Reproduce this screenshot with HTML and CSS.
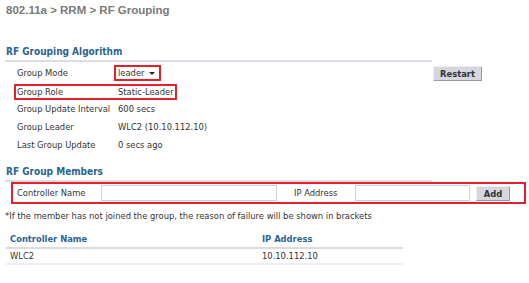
FILE: index.html
```html
<!DOCTYPE html>
<html>
<head>
	<meta charset="UTF-8">
	<title>RF Grouping</title>
	<link rel="stylesheet" href="styles.css">
</head>
<body>
	<h1 class="title">802.11a &gt; RRM &gt; RF Grouping</h1>

	<div class="section">
		<h2 class="section-head">RF Grouping Algorithm</h2>
		<div class="algo">
			<div class="rows">
				<div class="row">
					<span class="label">Group Mode</span>
					<span class="select">leader <span class="caret"></span></span>
				</div>
				<div class="row marked">
					<span class="label">Group Role</span>
					<span>Static-Leader</span>
				</div>
				<div class="row">
					<span class="label">Group Update Interval</span>
					<span>600 secs</span>
				</div>
				<div class="row">
					<span class="label">Group Leader</span>
					<span>WLC2 (10.10.112.10)</span>
				</div>
				<div class="row">
					<span class="label">Last Group Update</span>
					<span>0 secs ago</span>
				</div>
			</div>
			<div class="side">
				<button class="btn restart">Restart</button>
			</div>
		</div>
	</div>

	<div class="section members">
		<h2 class="section-head">RF Group Members</h2>
		<div class="add-box">
			<span class="label">Controller Name</span>
			<input type="text" class="field name-field">
			<span class="ip-label">IP Address</span>
			<input type="text" class="field ip-field">
			<button class="btn add">Add</button>
		</div>
		<p class="note">*If the member has not joined the group, the reason of failure will be shown in brackets</p>
	</div>

	<table class="list">
		<tr>
			<th class="col-name">Controller Name</th>
			<th>IP Address</th>
		</tr>
		<tr>
			<td>WLC2</td>
			<td>10.10.112.10</td>
		</tr>
	</table>
</body>
</html>
```
FILE: styles.css
```css
body {
	margin: 0;
	font-family: "DejaVu Sans Condensed", "DejaVu Sans", Verdana, sans-serif;
	font-size: 9.3px;
	line-height: 12px;
	color: #333;
	background: #fff;
	white-space: nowrap;
}
.title {
	margin: 2px 0 0 6px;
	height: 16px;
	font: bold 11.5px/16px "Liberation Sans", Arial, sans-serif;
	color: #7a7a7a;
}
.section-head {
	margin: 28px 0 0 5px;
	width: 426px;
	padding: 0 0 2px 1px;
	font-size: 10px;
	line-height: 12px;
	font-weight: bold;
	color: #2a6592;
	border-bottom: 2px solid #dcdce4;
}
.algo {
	display: flex;
	margin-top: 2px;
}
.rows {
	width: 433px;
}
.row {
	display: flex;
	align-items: center;
	height: 18px;
	margin-left: 14px;
	padding-left: 3px;
}
.row.marked {
	width: 158px;
	height: 12px;
	margin: 2px 0 0 14px;
	padding-left: 1px;
	border: 2px solid #e3202b;
}
.label {
	width: 101px;
	flex: none;
}
.select {
	display: flex;
	align-items: center;
	justify-content: space-between;
	box-sizing: border-box;
	width: 47px;
	height: 16px;
	padding: 0 4px 0 2px;
	margin-left: -4px;
	border: 2px solid #e3202b;
}
.caret {
	width: 0;
	height: 0;
	border-left: 3px solid transparent;
	border-right: 3px solid transparent;
	border-top: 3px solid #222;
}
.btn {
	font-family: "DejaVu Sans Condensed", "DejaVu Sans", Verdana, sans-serif;
	font-size: 9.3px;
	font-weight: bold;
	color: #333;
	background: #d6d6de;
	border: 1px solid;
	border-color: #eeeef2 #9a9aa4 #9a9aa4 #eeeef2;
	padding: 0;
	height: 15px;
}
.restart {
	width: 49px;
	margin-top: 2px;
}
.members .section-head {
	margin-top: 12px;
}
.add-box {
	display: flex;
	align-items: center;
	width: 507px;
	height: 18px;
	margin-left: 11px;
	padding-left: 4px;
	border: 2px solid #e3202b;
}
.add-box .label {
	width: 84px;
}
.field {
	height: 14px;
	border: 1px solid #d0d0d0;
	padding: 0;
	margin: 0;
}
.name-field {
	width: 174px;
}
.ip-label {
	width: 61px;
	padding-left: 17px;
}
.ip-field {
	width: 113px;
}
.add {
	width: 34px;
	margin-left: 6px;
}
.note {
	margin: 6px 0 0 5px;
}
.list {
	margin: 11px 0 0 6px;
	width: 397px;
	border-collapse: collapse;
}
.list th {
	text-align: left;
	color: #2a6592;
	font-size: 9.3px;
	line-height: 12px;
	padding: 0 0 2px 4px;
	border-bottom: 2px solid #dcdcdc;
}
.list .col-name {
	width: 248px;
}
.list td {
	padding: 1px 0 1px 4px;
	border-bottom: 2px solid #efefef;
}
```
